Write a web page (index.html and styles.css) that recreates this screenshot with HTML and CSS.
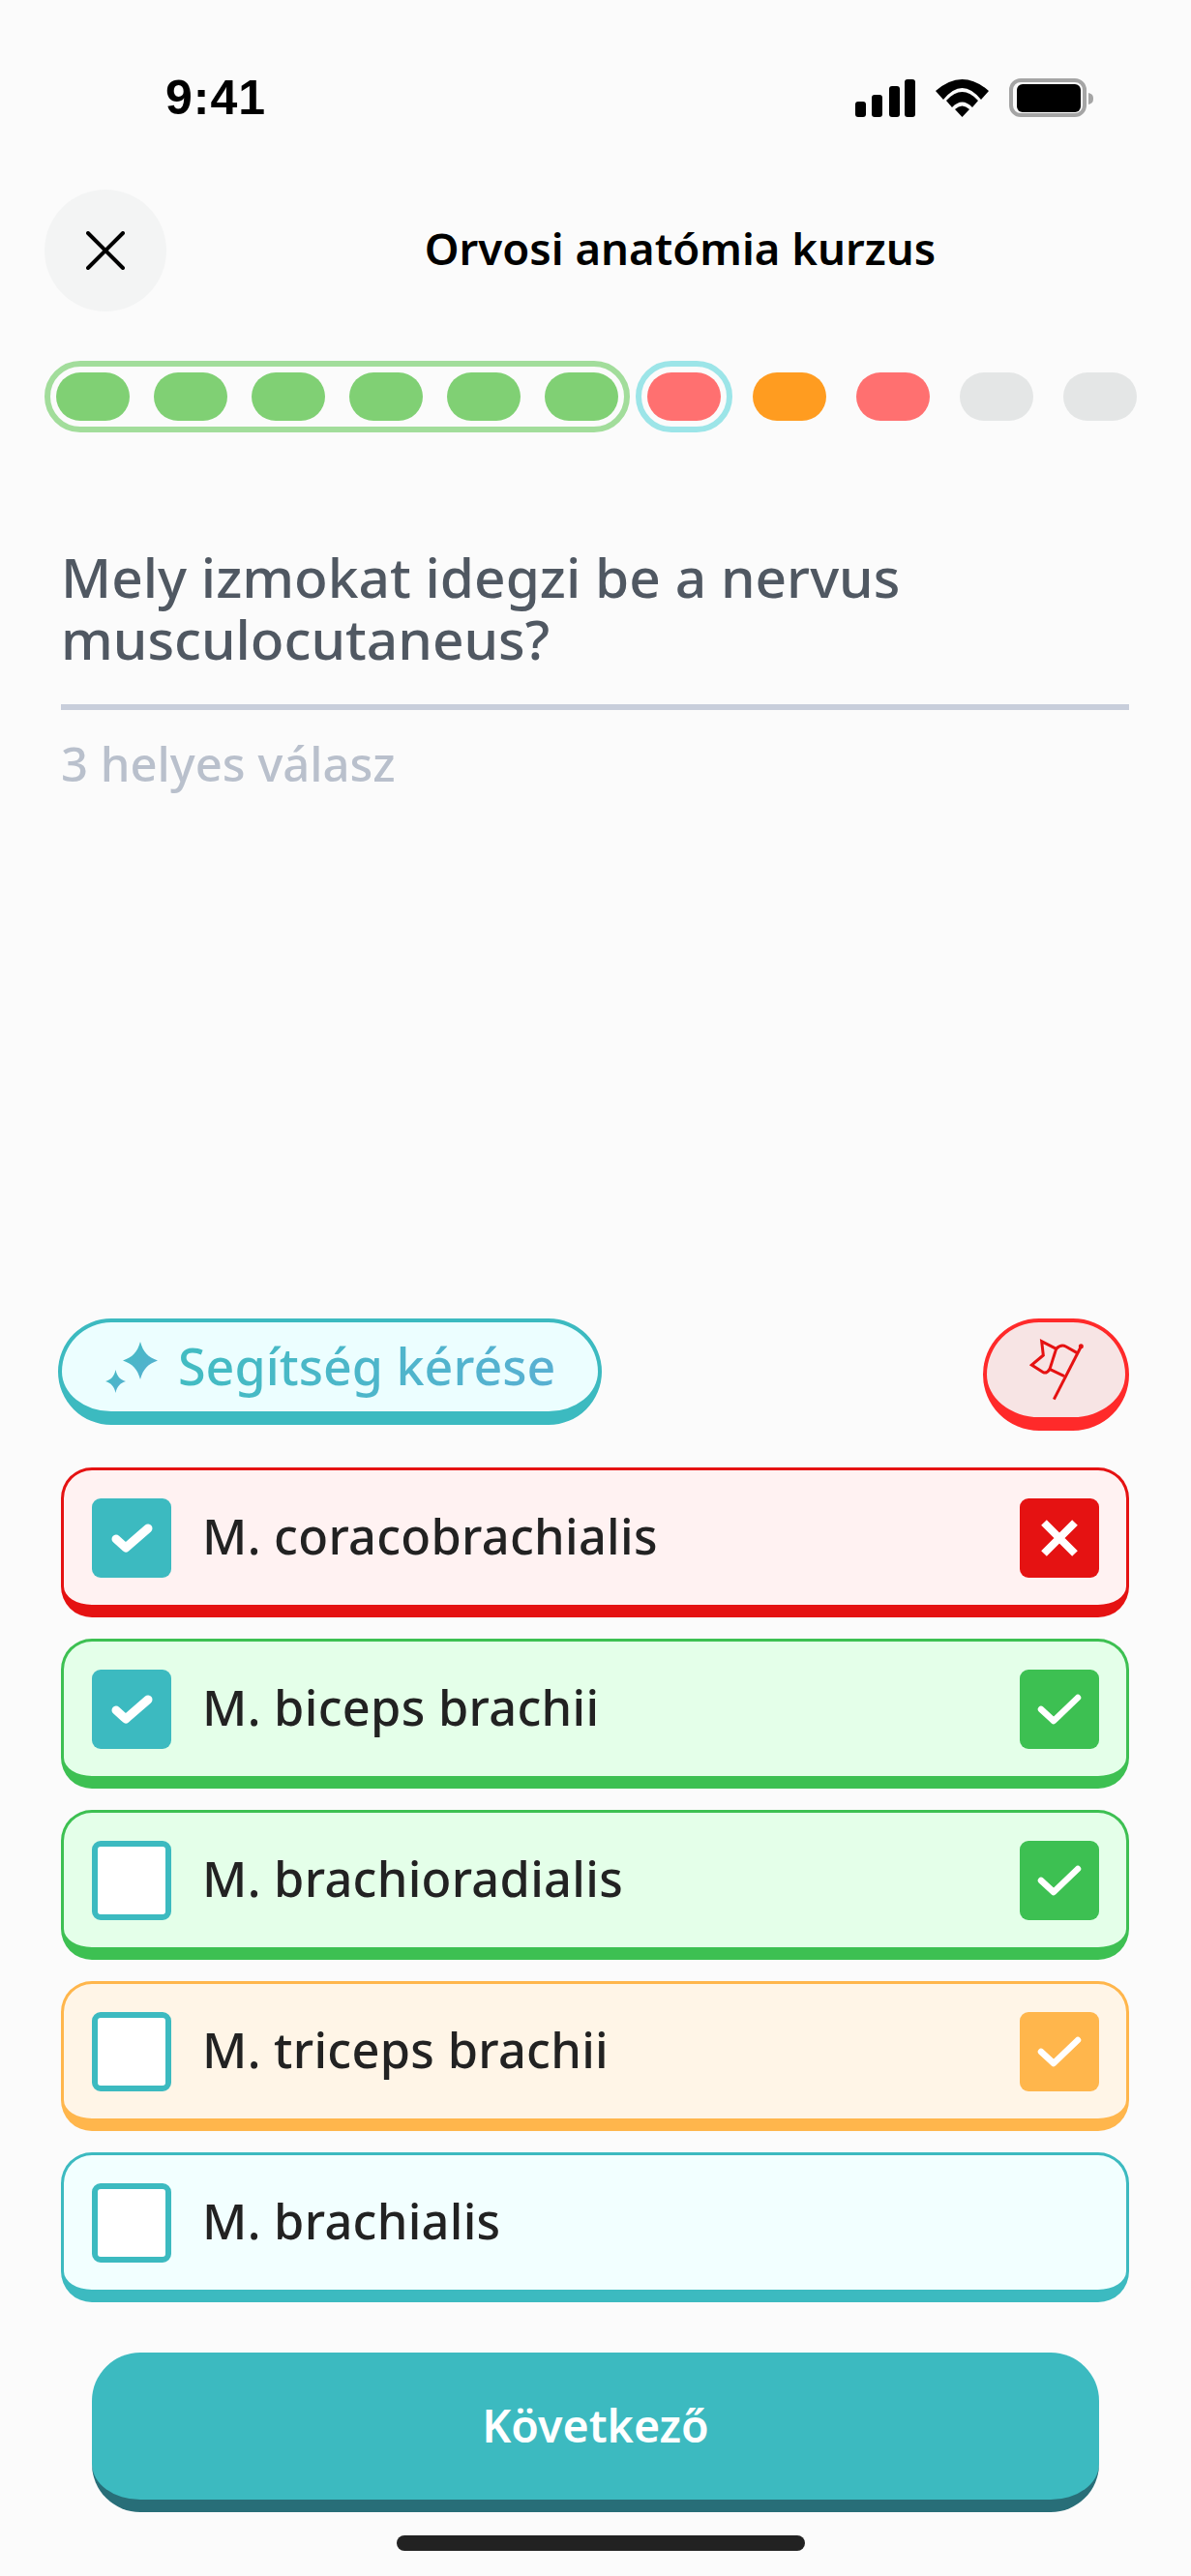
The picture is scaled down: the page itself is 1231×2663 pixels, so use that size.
FILE: index.html
```html
<!DOCTYPE html>
<html lang="hu">
<head>
    <meta charset="UTF-8">
    <meta name="viewport" content="width=device-width, initial-scale=1.0">
    <title>Orvosi anatómia kurzus</title>
    <link rel="stylesheet" href="styles.css">
</head>
<body>
    <div class="screen">
        <div class="status-bar">
            <span class="time">9:41</span>
            <div class="status-icons">
                <svg width="62" height="39" viewBox="0 0 62 39">
                    <rect x="0" y="23" width="11" height="16" rx="3"/>
                    <rect x="17" y="16" width="11" height="23" rx="3"/>
                    <rect x="35" y="7" width="11" height="32" rx="3"/>
                    <rect x="51" y="0" width="11" height="39" rx="3"/>
                </svg>
                <svg width="55" height="39" viewBox="0 0 55 39">
                    <path d="M0 12Q27.5 -12 55 12L47 21Q27.5 -3 8 21Z"/>
                    <path d="M11 22Q27.5 4 44 22L38 29Q27.5 18 17 29Z"/>
                    <path d="M20 31Q27.5 24 35 31L27.5 39Z"/>
                </svg>
                <svg width="88" height="40" viewBox="0 0 88 40">
                    <rect x="2" y="2" width="76" height="36" rx="10" fill="none" stroke="#a5a5a5" stroke-width="4"/>
                    <rect x="8" y="6" width="66" height="29" rx="6"/>
                    <path d="M82 15C86 16 87 18 87 21C87 24 86 26 82 27Z" fill="#a5a5a5"/>
                </svg>
            </div>
        </div>

        <div class="top-bar">
            <button class="close-btn">
                <svg width="40" height="40" viewBox="0 0 40 40">
                    <path d="M2 2L38 38M38 2L2 38" stroke="#000" stroke-width="4" stroke-linecap="round"/>
                </svg>
            </button>
            <h1 class="course-title">Orvosi anatómia kurzus</h1>
        </div>

        <div class="progress">
            <div class="progress-group done">
                <span class="dot green"></span>
                <span class="dot green"></span>
                <span class="dot green"></span>
                <span class="dot green"></span>
                <span class="dot green"></span>
                <span class="dot green"></span>
            </div>
            <div class="progress-group current">
                <span class="dot red"></span>
            </div>
            <span class="dot orange"></span>
            <span class="dot red"></span>
            <span class="dot grey"></span>
            <span class="dot grey"></span>
        </div>

        <div class="question">
            <h2>Mely izmokat idegzi be a nervus musculocutaneus?</h2>
            <p>3 helyes válasz</p>
        </div>

        <div class="actions">
            <button class="help-btn">
                <svg width="54" height="53" viewBox="0 0 54 53">
                    <defs>
                        <linearGradient id="spark" x1="0" y1="0" x2="1" y2="1">
                            <stop offset="0" stop-color="#42bcc2"/>
                            <stop offset="1" stop-color="#58aed2"/>
                        </linearGradient>
                    </defs>
                    <path fill="url(#spark)" d="M36 0C39 11 44 16 54 19.5C44 23 39 28 36 39C33 28 28 23 18 19.5C28 16 33 11 36 0Z"/>
                    <path fill="url(#spark)" d="M10.5 29C12 36 15 39 21 41C15 43 12 46 10.5 53C9 46 6 43 0 41C6 39 9 36 10.5 29Z"/>
                </svg>
                <span>Segítség kérése</span>
            </button>
            <button class="flag-btn">
                <svg width="58" height="64" viewBox="489 134 174 192" fill="none" stroke="#e51212" stroke-width="9">
                    <path d="M652 158L568 322"/>
                    <path d="M640 178L605 158Q590 150 575 165L530 142L535 185L499 215L535 238Q545 243 555 228L600 250"/>
                    <path d="M575 165L555 228"/>
                    <circle cx="652" cy="157" r="3" fill="#e51212"/>
                </svg>
            </button>
        </div>

        <div class="options">
            <div class="option wrong">
                <span class="box checked">
                    <svg width="82" height="82" viewBox="0 0 82 82"><path class="tick" d="M25 42L35 51L58 31"/></svg>
                </span>
                <span class="label">M. coracobrachialis</span>
                <span class="result">
                    <svg width="82" height="82" viewBox="0 0 82 82"><path d="M25 25L57 57M57 25L25 57" stroke="#fff" stroke-width="8"/></svg>
                </span>
            </div>
            <div class="option right">
                <span class="box checked">
                    <svg width="82" height="82" viewBox="0 0 82 82"><path class="tick" d="M25 42L35 51L58 31"/></svg>
                </span>
                <span class="label">M. biceps brachii</span>
                <span class="result">
                    <svg width="82" height="82" viewBox="0 0 82 82"><path class="tick thin" d="M22 41L35 53L60 29"/></svg>
                </span>
            </div>
            <div class="option right">
                <span class="box"></span>
                <span class="label">M. brachioradialis</span>
                <span class="result">
                    <svg width="82" height="82" viewBox="0 0 82 82"><path class="tick thin" d="M22 41L35 53L60 29"/></svg>
                </span>
            </div>
            <div class="option missed">
                <span class="box"></span>
                <span class="label">M. triceps brachii</span>
                <span class="result">
                    <svg width="82" height="82" viewBox="0 0 82 82"><path class="tick thin" d="M22 41L35 53L60 29"/></svg>
                </span>
            </div>
            <div class="option">
                <span class="box"></span>
                <span class="label">M. brachialis</span>
            </div>
        </div>

        <button class="next-btn">Következő</button>
        <div class="home-bar"></div>
    </div>
</body>
</html>
```

FILE: styles.css
```css
body {
    margin: 0;
    background-color: #fbfbfb;
    font-family: "Noto Sans", Arial, sans-serif;
}

button {
    font-family: inherit;
    cursor: pointer;
}

.screen {
    width: 1231px;
    height: 2663px;
    display: flex;
    flex-direction: column;
    box-sizing: border-box;
    overflow: hidden;
}

/* status bar */
.status-bar {
    display: flex;
    justify-content: space-between;
    align-items: center;
    height: 40px;
    padding: 81px 100px 0 171px;
}

.time {
    font-family: "Liberation Sans", Arial, sans-serif;
    font-weight: 700;
    font-size: 50px;
    letter-spacing: 1px;
    color: #000;
}

.status-icons {
    display: flex;
    align-items: center;
    gap: 21px;
}

/* header */
.top-bar {
    display: flex;
    align-items: center;
    margin-top: 75px;
    padding-left: 46px;
}

.close-btn {
    width: 126px;
    height: 126px;
    border: none;
    border-radius: 50%;
    background: #f3f4f4;
    padding: 0;
    display: flex;
    align-items: center;
    justify-content: center;
}

.course-title {
    flex: 1;
    margin: 0;
    padding: 0 0 6px 3px;
    text-align: center;
    font-size: 45.5px;
    font-weight: 600;
    color: #000;
}

/* progress */
.progress {
    display: flex;
    align-items: center;
    gap: 31px;
    margin-top: 51px;
    padding-left: 46px;
}

.progress-group {
    display: flex;
    gap: 25px;
    padding: 6px;
    border: 6px solid;
    border-radius: 38px;
}

.progress-group.done {
    border-color: #a2dd9b;
    margin-right: -25px;
}

.progress-group.current {
    border-color: #9ce5e8;
    margin-right: -10px;
}

.dot {
    width: 76px;
    height: 50px;
    border-radius: 25px;
}

.dot.green { background: #80d074; }
.dot.red { background: #ff7070; }
.dot.orange { background: #ff9c20; }
.dot.grey { background: #e4e6e6; }

/* question */
.question {
    margin: 117px 64px 0 63px;
}

.question h2 {
    margin: 0;
    padding-bottom: 36px;
    border-bottom: 6px solid #c8cedb;
    font-size: 56.8px;
    line-height: 64px;
    font-weight: 500;
    color: #505862;
}

.question p {
    margin: 25px 0 0;
    font-size: 49px;
    line-height: 60px;
    font-weight: 500;
    color: #b9c0cc;
}

/* help and flag */
.actions {
    display: flex;
    justify-content: space-between;
    align-items: flex-start;
    margin: auto 64px 0 60px;
}

.help-btn {
    display: flex;
    align-items: center;
    gap: 21px;
    height: 110px;
    box-sizing: border-box;
    padding: 0 44px 0 45px;
    border: 4px solid #3cbac0;
    border-bottom-width: 14px;
    border-radius: 55px;
    background: #ecfeff;
}

.help-btn span {
    padding-bottom: 4px;
    font-size: 52px;
    font-weight: 500;
    background: linear-gradient(90deg, #42bcc2, #58b0d2);
    -webkit-background-clip: text;
    background-clip: text;
    color: transparent;
}

.flag-btn {
    width: 151px;
    height: 116px;
    box-sizing: border-box;
    padding: 0;
    border: 4px solid #ff2a2a;
    border-bottom-width: 14px;
    border-radius: 58px;
    background: #f7e4e4;
    display: flex;
    align-items: center;
    justify-content: center;
}

/* answer options */
.options {
    display: flex;
    flex-direction: column;
    gap: 22px;
    margin: 38px 64px 0 63px;
}

.option {
    display: flex;
    align-items: center;
    height: 155px;
    box-sizing: border-box;
    padding: 0 28px 0 29px;
    border: 3px solid #3cbac0;
    border-bottom-width: 13px;
    border-radius: 32px;
    background: #f2ffff;
}

.option.wrong { border-color: #e51212; background: #fff2f2; }
.option.right { border-color: #3dc052; background: #e4ffe9; }
.option.missed { border-color: #ffb64c; background: #fff5e7; }

.box {
    width: 82px;
    height: 82px;
    box-sizing: border-box;
    border: 6px solid #3cbac0;
    border-radius: 9px;
    background: #fff;
    flex-shrink: 0;
}

.box.checked {
    border: none;
    background: #3cbac0;
}

.box svg,
.result svg {
    display: block;
}

.tick {
    fill: none;
    stroke: #fff;
    stroke-width: 9;
    stroke-linecap: round;
    stroke-linejoin: round;
}

.tick.thin {
    stroke-width: 6.5;
}

.label {
    flex: 1;
    margin-left: 32px;
    padding-bottom: 4px;
    font-size: 50.5px;
    font-weight: 500;
    letter-spacing: 0.3px;
    color: #222;
}

.result {
    width: 82px;
    height: 82px;
    border-radius: 9px;
}

.wrong .result { background: #e51212; }
.right .result { background: #3dc052; }
.missed .result { background: #ffb64c; }

/* bottom */
.next-btn {
    align-self: center;
    width: 1041px;
    height: 165px;
    margin: 52px 0 0 0;
    padding-bottom: 4px;
    border: none;
    border-bottom: 13px solid #286e78;
    border-radius: 50px;
    background: #3cbac0;
    color: #fff;
    font-size: 46.5px;
    font-weight: 600;
}

.home-bar {
    align-self: center;
    width: 422px;
    height: 16px;
    margin: 24px 0 26px 10px;
    border-radius: 8px;
    background: #222;
}
```
